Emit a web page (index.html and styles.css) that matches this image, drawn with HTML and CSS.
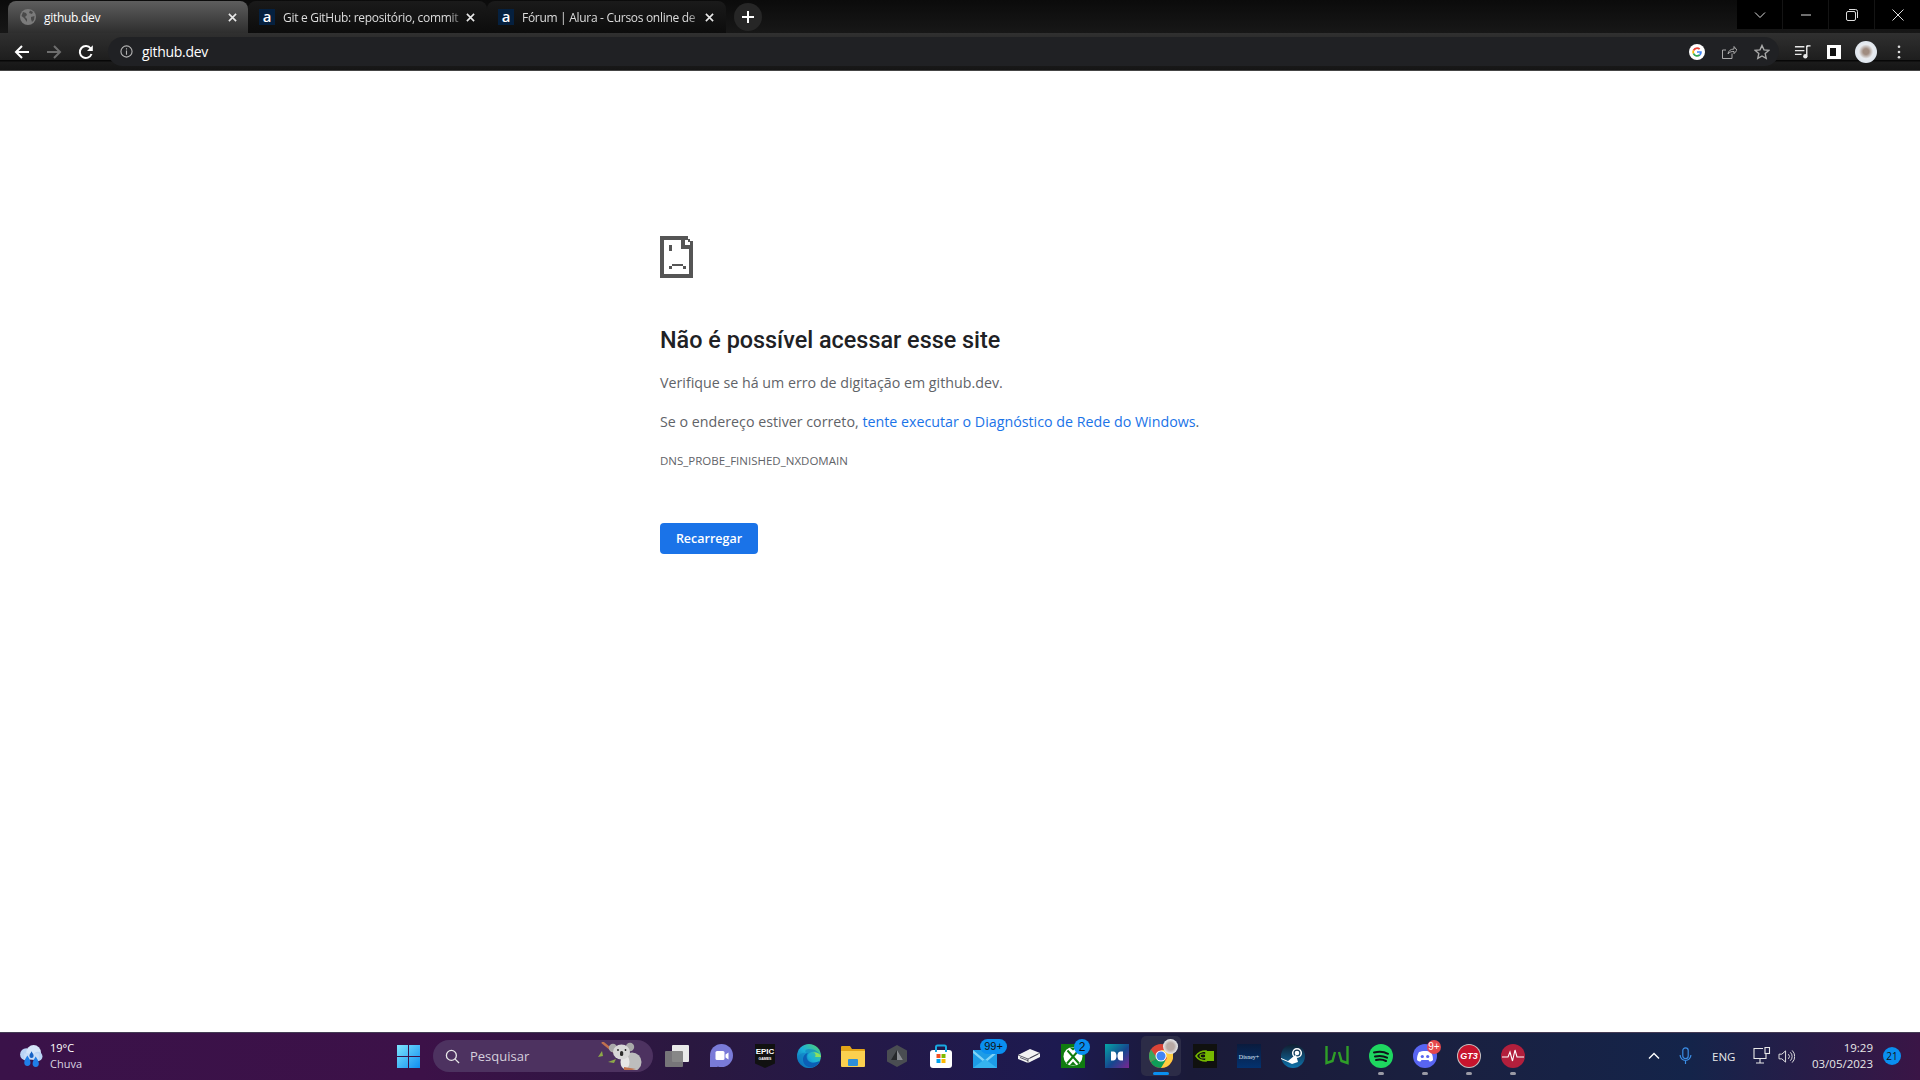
FILE: index.html
```html
<!DOCTYPE html>
<html lang="pt-BR">
<head>
<meta charset="utf-8">
<title>github.dev</title>
<link rel="stylesheet" href="styles.css">
</head>
<body>
<header class="tabstrip">
  <div class="tabs">
    <div class="tab tab-active">
      <svg class="favicon" viewBox="0 0 16 16"><circle cx="8" cy="8" r="8" fill="#7b7b7b"/><path d="M3 3l3 1 1 2-2 2 2 2v3L4 9 1.500 7zM10 1.500l3 1.500-1 2-3-1zM11 8l3.500-1-.5 4-2 2-1-3z" fill="#4a4a4a"/></svg>
      <span class="tab-title">github.dev</span>
      <svg class="tab-close" viewBox="0 0 10 10"><path d="M1 1l8 8M9 1l-8 8"/></svg>
    </div>
    <div class="tab">
      <span class="alura">a</span>
      <span class="tab-title fade">Git e GitHub: repositório, commit</span>
      <svg class="tab-close" viewBox="0 0 10 10"><path d="M1 1l8 8M9 1l-8 8"/></svg>
    </div>
    <div class="tab">
      <span class="alura">a</span>
      <span class="tab-title fade">Fórum | Alura - Cursos online de</span>
      <svg class="tab-close" viewBox="0 0 10 10"><path d="M1 1l8 8M9 1l-8 8"/></svg>
    </div>
    <div class="newtab"><svg viewBox="0 0 12 12"><path d="M6 0v12M0 6h12"/></svg></div>
  </div>
  <div class="winctl">
    <div class="winbtn"><svg viewBox="0 0 12 8"><path d="M1 1.500l5 5 5-5"/></svg></div>
    <div class="winbtn"><svg viewBox="0 0 12 8"><path d="M1 4h10"/></svg></div>
    <div class="winbtn"><svg viewBox="0 0 12 12"><rect x=".5" y="2.500" width="9" height="9" rx="1.500"/><path d="M3 .5h6.500a2 2 0 0 1 2 2V9"/></svg></div>
    <div class="winbtn"><svg viewBox="0 0 12 12"><path d="M.5.5l11 11M11.500.5l-11 11"/></svg></div>
  </div>
</header>

<nav class="toolbar">
  <svg class="nav-ic" viewBox="0 0 16 16"><path d="M15 8H2M8 2L2 8l6 6"/></svg>
  <svg class="nav-ic dim" viewBox="0 0 16 16"><path d="M1 8h13M8 2l6 6-6 6"/></svg>
  <svg class="nav-ic" viewBox="0 0 16 16"><path d="M13.500 10a6 6 0 1 1-.8-5.500"/><path class="solid" d="M14.800 1.200v5.800H9z"/></svg>
  <div class="omnibox">
    <svg class="info" viewBox="0 0 14 14"><circle cx="7" cy="7" r="6"/><path d="M7 6v4.500M7 3.500v1.300"/></svg>
    <span class="url">github.dev</span>
    <div class="omni-right">
      <svg class="g-logo" viewBox="0 0 16 16"><circle cx="8" cy="8" r="8" fill="#fff"/><path d="M8 3.200a4.800 4.800 0 0 1 3.300 1.300L10 5.800A3 3 0 0 0 5.200 7L3.700 5.900A4.800 4.800 0 0 1 8 3.200z" fill="#ea4335"/><path d="M3.700 5.900L5.200 7a3 3 0 0 0 0 2l-1.500 1.100a4.800 4.800 0 0 1 0-4.200z" fill="#fbbc05"/><path d="M3.700 10.100L5.200 9A3 3 0 0 0 10 10.300l1.400 1.100A4.800 4.800 0 0 1 3.700 10.100z" fill="#34a853"/><path d="M12.800 8c0 1.500-.5 2.600-1.400 3.400L10 10.300c.5-.4.800-.9.900-1.500H8V7.200h4.700c.1.300.1.500.1.800z" fill="#4285f4"/></svg>
      <svg class="omni-ic" viewBox="0 0 16 16"><path d="M11 9.500V14.500H1.500V6H5M7 10c.3-3 2.500-5 6-5V2.500l3 3.700-3 3.500V7.500C10.500 7.300 8.500 8 7 10z" stroke-width="1"/></svg>
      <svg class="omni-ic" viewBox="0 0 16 16"><path d="M8 1.500l2 4.400 4.800.5-3.600 3.200 1 4.700L8 12l-4.200 2.300 1-4.700L1.200 6.400 6 5.900z" stroke-width="1.400"/></svg>
    </div>
  </div>
  <div class="tool-right">
    <svg class="tool-ic" viewBox="0 0 18 16"><path d="M1 2.500h10M1 6.500h10M1 10.500h7M15 2h-1.500v10" stroke="#e8e8e8" stroke-width="1.500" fill="none"/><circle cx="12" cy="12.500" r="2.300" fill="#e8e8e8"/><path d="M13.500 1.500H17.500" stroke="#e8e8e8" stroke-width="1.500"/></svg>
    <div class="sidepanel"></div>
    <div class="avatar"></div>
    <svg class="menu" viewBox="0 0 4 16"><circle cx="2" cy="2" r="1.500"/><circle cx="2" cy="8" r="1.500"/><circle cx="2" cy="14" r="1.500"/></svg>
  </div>
</nav>

<main class="page">
  <div class="wrapper">
    <svg class="sad" viewBox="0 0 32 41" shape-rendering="crispEdges"><path d="M0 0h24v4H4v33h24V13h-8V0h4v9h8v-1h4v33H0z"/><path d="M24 0h3v4h-3zM27 3h2v3h-2zM29 5h3v4h-3zM9 9h3v6H9zM12 27h10v2H12zM9 29h3v3H9zM22 29h3v3h-3z"/></svg>
    <h1 class="err-title">Não é possível acessar esse site</h1>
    <p class="err-text">Verifique se há um erro de digitação em github.dev.</p>
    <p class="err-text">Se o endereço estiver correto, <a class="err-link" href="#">tente executar o Diagnóstico de Rede do Windows</a>.</p>
    <div class="err-code">DNS_PROBE_FINISHED_NXDOMAIN</div>
    <button class="reload">Recarregar</button>
  </div>
</main>

<footer class="taskbar">
  <div class="weather">
    <svg class="weather-ic" viewBox="0 0 24 24"><circle cx="8" cy="10" r="6" fill="#b9d4f5"/><circle cx="15" cy="8" r="7" fill="#d5e6fa"/><circle cx="19" cy="12" r="4.500" fill="#b9d4f5"/><rect x="6" y="9" width="14" height="6" fill="#c8ddf7"/><path d="M9 11c2 3 3 5 3 7a3 3 0 0 1-6 0c0-2 1-4 3-7zM17 12c2 3 3 5 3 7a3 3 0 0 1-6 0c0-2 1-4 3-7z" fill="#1f7fe8"/><path d="M13 7c1 2 2 3 2 4.500a2 2 0 0 1-4 0C11 10 12 9 13 7z" fill="#1762c4"/></svg>
    <div class="weather-text"><span>19°C</span><span class="weather-sub">Chuva</span></div>
  </div>
  <div class="start"><svg viewBox="0 0 23 23"><defs><linearGradient id="win" x1="0" y1="0" x2="1" y2="1"><stop offset="0" stop-color="#7de5fd"/><stop offset="1" stop-color="#0f8df0"/></linearGradient></defs><path fill="url(#win)" d="M0 0h11v11H0zM12 0h11v11H12zM0 12h11v11H0zM12 12h11v11H12z"/></svg></div>
  <div class="search">
    <svg class="search-ic" viewBox="0 0 16 16"><circle cx="6.800" cy="6.800" r="5.300"/><path d="M10.800 10.800L15 15"/></svg>
    <span class="search-text">Pesquisar</span>
    <svg class="koala" viewBox="0 0 46 28"><path d="M5 0l33 27" stroke="#c0714e" stroke-width="2.400"/><path d="M1 15l4-6 1 5zM11 20l8-3-2 4z" fill="#8ea948"/><circle cx="16" cy="6" r="4.200" fill="#a9a9a9"/><circle cx="33" cy="5" r="4.200" fill="#a9a9a9"/><circle cx="35" cy="20" r="9.500" fill="#bdbdbd"/><ellipse cx="28" cy="20" rx="4.500" ry="7" fill="#e6e6e6"/><ellipse cx="24.500" cy="10" rx="8.500" ry="7.500" fill="#d8d8d8"/><rect x="23" y="9" width="3.200" height="5" rx="1.600" fill="#2c2c2c"/><circle cx="21" cy="8" r=".9" fill="#222"/><circle cx="28.500" cy="8" r=".9" fill="#222"/><path d="M27 25l12 2-4 1h-8z" fill="#c0714e"/></svg>
  </div>
  <div class="apps">
    <div class="app"><svg viewBox="0 0 24 24"><rect x="7" y="1" width="17" height="17" rx="1" fill="#e9e9e9"/><rect x="0" y="7" width="18" height="16" rx="1" fill="#7e7e7e" opacity=".92"/></svg></div>
    <div class="app"><svg viewBox="0 0 24 24"><circle cx="12.500" cy="11.500" r="11.500" fill="#7a7bd8"/><path d="M1 12v11h8z" fill="#7a7bd8"/><rect x="6.500" y="7" width="9" height="9" rx="1.500" fill="#fff"/><path d="M16.500 10.500l3-2v7l-3-2z" fill="#fff"/></svg></div>
    <div class="app"><svg viewBox="0 0 20 24"><path d="M0 0h20v19.500L10 24 0 19.500z" fill="#111"/><text class="epic" x="10" y="10">EPIC</text><text class="epic-sm" x="10" y="16">GAMES</text></svg></div>
    <div class="app"><svg viewBox="0 0 24 24"><defs><linearGradient id="edge" x1="0" y1="1" x2="1" y2="0"><stop offset="0" stop-color="#0c59a4"/><stop offset=".5" stop-color="#1bb0da"/><stop offset="1" stop-color="#55d36c"/></linearGradient></defs><circle cx="12" cy="12" r="12" fill="url(#edge)"/><path d="M24 14c-1-5-5-7-9-6-5 1-6 6-3 9 3 2 7 2 11 0-1 4-6 7-11 7-6 0-11-5-12-11C3 9 7 8 10 9c-3-1-2-4 2-4 6 0 11 3 12 9z" fill="#0f7bc4" opacity=".55"/><path d="M11 9c-2 2-2 6 1 8.500 4 2.500 8 1 11-1-1 3-4 6-8 7-5 0-9-3-9-8 0-3 2-6 5-6.500z" fill="#0b5fb5"/><path d="M24 13c0-3-4-5-8-4.500 3 .5 3 3 2 4.500z" fill="#8fe05f"/></svg></div>
    <div class="app"><svg viewBox="0 0 24 24"><path d="M0 3a1 1 0 0 1 1-1h8l2 3h12a1 1 0 0 1 1 1v16H0z" fill="#e2a418"/><path d="M0 7h24v15a1 1 0 0 1-1 1H1a1 1 0 0 1-1-1z" fill="#fbd04f"/><rect x="7" y="15" width="10" height="7" rx="1" fill="#2d8fd8"/></svg></div>
    <div class="app"><svg viewBox="0 0 24 24"><path d="M12 1l10 5.500v11L12 23 2 17.500v-11z" fill="#4a4d52"/><path d="M12 6l6 10H6z" fill="#26282b"/><path d="M12 6l6 10h-6z" fill="#8a8d92"/></svg></div>
    <div class="app"><svg viewBox="0 0 24 24"><rect x="1" y="6" width="22" height="18" rx="3" fill="#fff"/><path d="M7 8V3a1.500 1.500 0 0 1 1.500-1.500h7A1.500 1.500 0 0 1 17 3v5" fill="none" stroke="#19a8e0" stroke-width="2"/><rect x="7.500" y="10" width="4" height="4" fill="#f25022"/><rect x="12.500" y="10" width="4" height="4" fill="#7fba00"/><rect x="7.500" y="15" width="4" height="4" fill="#00a4ef"/><rect x="12.500" y="15" width="4" height="4" fill="#ffb900"/></svg></div>
    <div class="app"><svg viewBox="0 0 24 24"><path d="M0 6h24v18H0z" fill="#1d9ce6"/><path d="M0 6l12 10 12-10v3L12 19 0 9z" fill="#7fd3f7"/><path d="M0 24l12-9 12 9z" fill="#35b4ef"/></svg><span class="badge badge-wide">99+</span></div>
    <div class="app"><svg viewBox="0 0 24 24"><path d="M1 11l12-6 10 4v4L11 19 1 15z" fill="#f3f3f3"/><path d="M1 11l10 4 12-6M11 15v4M3 13.500l8 3.200M13 14l8-4" fill="none" stroke="#3a3a4a" stroke-width=".8"/></svg></div>
    <div class="app"><svg viewBox="0 0 24 24"><rect width="24" height="24" fill="#107c10"/><circle cx="12" cy="12.500" r="9.500" fill="#fff"/><path d="M6.500 6.500L18 19.500M17.500 6.500L6 19.500" stroke="#107c10" stroke-width="2"/><path d="M8.500 3.500L12 6.500l3.500-3zM8.500 21.500L12 17.500l3.500 4z" fill="#107c10"/></svg><span class="badge badge-round">2</span></div>
    <div class="app"><svg viewBox="0 0 24 24"><defs><linearGradient id="dolby" x1="0" y1="0" x2="1" y2="1"><stop offset="0" stop-color="#05a6a6"/><stop offset=".55" stop-color="#16478f"/><stop offset="1" stop-color="#7b2592"/></linearGradient></defs><rect width="24" height="24" fill="url(#dolby)"/><path d="M6 7.500h2.500c2.500 0 3 3 3 4.500s-.5 4.500-3 4.500H6zM18 7.500h-2.500c-2.500 0-3 3-3 4.500s.5 4.500 3 4.500H18z" fill="#fff"/></svg></div>
    <div class="app app-active"><svg viewBox="0 0 24 24"><circle cx="12" cy="12" r="12" fill="#db4437"/><path d="M12 12L1.600 18A12 12 0 0 0 12 24l5.500-6z" fill="#0f9d58"/><path d="M12 6h10.500A12 12 0 0 1 12 24l6-10z" fill="#ffcd40"/><path d="M1.600 18A12 12 0 0 1 2 5.500L8 14z" fill="#3ba55d"/><circle cx="12" cy="12" r="5.500" fill="#fff"/><circle cx="12" cy="12" r="4.500" fill="#4285f4"/></svg><span class="overlay-avatar"></span><span class="run-bar"></span></div>
    <div class="app"><svg viewBox="0 0 24 24"><rect width="24" height="24" fill="#10110f"/><rect x="13" y="7" width="8" height="10" fill="#76b900"/><path d="M3 12c2-3 6-5 10-5v10c-4 0-8-2-10-5z" fill="none" stroke="#76b900" stroke-width="1.600"/><ellipse cx="10" cy="12" rx="3" ry="2" fill="none" stroke="#76b900" stroke-width="1.200"/></svg></div>
    <div class="app"><svg viewBox="0 0 24 24"><defs><linearGradient id="dis" x1="0" y1="0" x2="0" y2="1"><stop offset="0" stop-color="#0a1b3d"/><stop offset="1" stop-color="#03326f"/></linearGradient></defs><rect width="24" height="24" fill="url(#dis)"/><text class="disney" x="12" y="14.500">Disney+</text></svg></div>
    <div class="app"><svg viewBox="0 0 24 24"><defs><linearGradient id="steam" x1="0" y1="0" x2="0" y2="1"><stop offset="0" stop-color="#111d2e"/><stop offset="1" stop-color="#0e73ac"/></linearGradient></defs><circle cx="12" cy="12" r="12" fill="url(#steam)"/><path d="M0 14l7 3 6-5 2-1 2 7-6 2-4-2-7-3z" fill="#fff"/><circle cx="16" cy="9" r="4.300" fill="none" stroke="#fff" stroke-width="1.500"/><circle cx="16" cy="9" r="2.300" fill="#fff"/></svg></div>
    <div class="app"><svg viewBox="0 0 24 24"><path d="M1.500 2v17l6-2 2.500-9M22.500 2v17l-6-2-2.500-9" fill="none" stroke="#2f9e28" stroke-width="2.400"/></svg></div>
    <div class="app"><svg viewBox="0 0 24 24"><circle cx="12" cy="12" r="12" fill="#1ed760"/><path d="M5 8.500c4.500-1.200 10-1 14 1.300M6 12.500c4-1 8.500-.7 12 1.200M7 16c3.500-.8 7-.5 10 1" fill="none" stroke="#10131a" stroke-width="2" stroke-linecap="round"/></svg><span class="dot"></span></div>
    <div class="app"><svg viewBox="0 0 24 24"><circle cx="12" cy="12" r="12" fill="#5865f2"/><path d="M6 8c3-1.500 9-1.500 12 0 1.500 2.500 2 5 2 8-1 1-2.500 1.500-3.500 1.500L15.500 16h-7l-1 1.500C6.500 17.500 5 17 4 16c0-3 .5-5.500 2-8z" fill="#fff"/><circle cx="9.300" cy="12.500" r="1.600" fill="#5865f2"/><circle cx="14.700" cy="12.500" r="1.600" fill="#5865f2"/></svg><span class="badge badge-red">9+</span><span class="dot"></span></div>
    <div class="app"><svg viewBox="0 0 24 24"><circle cx="12" cy="12" r="12" fill="#c8c2c2"/><circle cx="12" cy="12" r="11" fill="#c7142d"/><text class="gt3" x="12" y="15">GT3</text></svg><span class="dot"></span></div>
    <div class="app"><svg viewBox="0 0 24 24"><circle cx="12" cy="12" r="12" fill="#b21f3c"/><path d="M1 13h6l2-5 2.500 9 2.500-11 2 7h7" fill="none" stroke="#fff" stroke-width="1.100"/></svg><span class="dot"></span></div>
  </div>
  <div class="tray">
    <svg class="tray-caret" viewBox="0 0 12 8"><path d="M1 6.500l5-5 5 5"/></svg>
    <svg class="tray-mic" viewBox="0 0 14 20"><rect x="4" y="1" width="6" height="12" rx="3"/><path d="M1 9a6 6 0 0 0 12 0M7 15v4"/></svg>
    <span class="tray-lang">ENG</span>
    <svg class="tray-net" viewBox="0 0 18 18"><path d="M10 1.500H1v10h12V7M7 11.500v4M3 16h8M13 7v5"/><rect x="12" y=".5" width="4.500" height="6"/></svg>
    <svg class="tray-vol" viewBox="0 0 18 16"><path d="M1 5.500h3l4-3.500v12l-4-3.500H1zM11 5.500a3.500 3.500 0 0 1 0 5M13 3.500a6 6 0 0 1 0 9M15 1.500a9 9 0 0 1 0 13"/></svg>
    <div class="clock"><span>19:29</span><span>03/05/2023</span></div>
    <span class="notif">21</span>
  </div>
</footer>
</body>
</html>
```
FILE: styles.css
```css
* { box-sizing: border-box; }
html, body { margin: 0; height: 100%; }
body {
  width: 1920px; height: 1080px; overflow: hidden;
  display: flex; flex-direction: column;
  font-family: "Open Sans", "Noto Sans", sans-serif;
  background: #fff;
}

/* tab strip */
.tabstrip { height: 33px; flex: none; display: flex; justify-content: space-between; background: linear-gradient(#0b0b0b, #171717); }
.tabs { display: flex; align-items: flex-end; padding-left: 8px; }
.tab {
  width: 239px; height: 32px; padding: 0 8px 0 11px;
  display: flex; align-items: center; border-radius: 8px 8px 0 0;
  background: linear-gradient(#1a1a1a, #0c0c0c);
}
.tab-active { width: 240px; padding: 0 7px 0 12px; background: linear-gradient(#5e5e5e, #2e2e2e); }
.favicon { width: 16px; height: 16px; flex: none; }
.tab-title { font-size: 12px; color: #fff; margin-left: 8px; flex: 1; white-space: nowrap; letter-spacing: -.3px; min-width: 0; }
.fade { color: #ddd; -webkit-mask-image: linear-gradient(90deg, #000 90%, transparent); mask-image: linear-gradient(90deg, #000 90%, transparent); }
.tab-close { width: 9px; height: 9px; margin: 0 4px 0 0; flex: none; fill: none; stroke: #e8e8e8; stroke-width: 1.800; }
.alura { width: 16px; height: 16px; flex: none; background: #05203f; color: #fff; font-size: 15px; font-weight: 600; line-height: 14px; text-align: center; }
.newtab { width: 28px; height: 28px; margin: 0 0 2px 8px; border-radius: 50%; background: #262626; display: flex; align-items: center; justify-content: center; }
.newtab svg { width: 12px; height: 12px; fill: none; stroke: #fff; stroke-width: 2; }
.winctl { display: flex; height: 29px; background: #000; width: 183px; }
.winbtn { flex: 1; display: flex; align-items: center; justify-content: center; border-left: 1px solid #141414; }
.winbtn:first-child { border-left: 0; }
.winbtn svg { width: 12px; height: 12px; fill: none; stroke: #ddd; stroke-width: 1; }

/* toolbar */
.toolbar {
  height: 38px; flex: none; display: flex; align-items: center; padding: 0 0 0 14px;
  background: linear-gradient(#303030 0, #1e1e1e 72%, #070707 74%, #070707 76%, #1b1b1b 78%, #151515 100%);
  border-bottom: 1px solid #454545;
}
.nav-ic { width: 16px; height: 16px; margin-right: 16px; fill: none; stroke: #fff; stroke-width: 2; flex: none; }
.nav-ic.dim { stroke: #6e6e6e; }
.nav-ic .solid { fill: #fff; stroke: none; }
.omnibox {
  width: 1671px; height: 29px; margin-left: -2px; border-radius: 15px; background: #202124;
  display: flex; align-items: center; padding: 0 0 0 12px;
}
.info { width: 13px; height: 13px; fill: none; stroke: #b5b5b5; stroke-width: 1.200; flex: none; }
.url { font-size: 14px; color: #fff; margin-left: 9px; letter-spacing: -.3px; }
.omni-right { margin-left: auto; display: flex; align-items: center; gap: 17px; padding-right: 9px; }
.g-logo { width: 16px; height: 16px; position: relative; left: 1px; }
.omni-ic { width: 16px; height: 16px; fill: none; stroke: #aaa; }
.tool-right { display: flex; align-items: center; margin-left: 15px; }
.tool-ic { width: 17px; height: 16px; }
.sidepanel { width: 14px; height: 14px; margin-left: 16px; border: 3px solid #fff; border-right-width: 5px; background: #111; }
.avatar { width: 22px; height: 22px; margin-left: 14px; border-radius: 50%; background: radial-gradient(circle at 50% 48%, #a08c80 0 18%, #e8ebef 45%, #dfe6ee 70%, #7d93ad 100%); }
.menu { width: 4px; height: 14px; margin-left: 20px; fill: #ddd; }

/* error page */
.page { flex: 1; min-height: 0; background: #fff; }
.wrapper { width: 600px; margin: 0 auto; padding-top: 165px; display: flex; flex-direction: column; align-items: flex-start; }
.sad { width: 33px; height: 42px; fill: #555; flex: none; }
.err-title { margin: 46px 0 15px; font-family: Roboto, "Open Sans", sans-serif; font-size: 23.400px; font-weight: 500; line-height: 32px; color: #202124; white-space: nowrap; }
.err-text { margin: 0 0 15px; font-size: 14.250px; line-height: 24px; color: #5f6368; white-space: nowrap; }
.err-link { color: #1a73e8; text-decoration: none; }
.err-code { margin-top: 4px; font-size: 11.500px; line-height: 16px; color: #5f6368; }
.reload { margin-top: 54px; width: 98px; height: 31px; padding: 0 0 1px; border: 0; border-radius: 4px; background: #1a73e8; color: #fff; font-family: inherit; font-size: 12.500px; font-weight: 600; }

/* taskbar */
.taskbar {
  height: 48px; flex: none; display: flex; align-items: center; color: #fff;
  background: linear-gradient(90deg, #3a1249 0, #3c1148 22%, #2a1840 36%, #1d1a50 55%, #1a1a38 62%, #1a2040 75%, #14244a 88%, #3a1546 100%);
  box-shadow: inset 0 1px 0 #453c55;
}
.weather { width: 386px; flex: none; display: flex; align-items: center; padding-left: 18px; }
.weather-ic { width: 25px; height: 25px; }
.weather-text { margin-left: 7px; display: flex; flex-direction: column; font-size: 11px; line-height: 16px; }
.weather-sub { color: #d9d4e0; }
.start { width: 44px; flex: none; display: flex; justify-content: center; }
.start svg { width: 23px; height: 23px; }
.search { width: 220px; height: 32px; margin: 0 2px 0 3px; flex: none; border-radius: 16px; background: #4d3260; display: flex; align-items: center; padding-left: 12px; position: relative; }
.search-ic { width: 15px; height: 15px; fill: none; stroke: #e8e8e8; stroke-width: 1.400; flex: none; }
.search-text { font-size: 13px; color: #d6d0dd; margin-left: 10px; }
.koala { position: absolute; right: 10px; top: 2px; width: 46px; height: 28px; }
.apps { display: flex; width: 880px; flex: none; }
.app { width: 44px; height: 48px; flex: none; display: flex; align-items: center; justify-content: center; position: relative; }
.app svg { width: 24px; height: 24px; position: relative; }
.app-active::before { content: ""; position: absolute; left: 2px; top: 4px; width: 40px; height: 40px; border-radius: 5px; background: #2c2c47; }
.epic { font-family: "Liberation Sans", sans-serif; font-size: 8px; font-weight: 700; fill: #fff; text-anchor: middle; }
.epic-sm { font-family: "Liberation Sans", sans-serif; font-size: 3.500px; font-weight: 700; fill: #fff; text-anchor: middle; }
.disney { font-family: "Liberation Serif", serif; font-size: 6px; fill: #dfe8f5; text-anchor: middle; }
.gt3 { font-family: "Liberation Sans", sans-serif; font-size: 9px; font-weight: 700; font-style: italic; fill: #fff; text-anchor: middle; }
.badge { position: absolute; font-size: 12px; line-height: 16px; text-align: center; font-family: "Liberation Sans", sans-serif; }
.badge-wide { top: 7px; left: 17px; width: 27px; height: 15px; line-height: 15px; border-radius: 8px; background: #0a8ff0; color: #111; font-size: 11px; }
.badge-round { top: 7px; left: 23px; width: 16px; height: 16px; border-radius: 50%; background: #0a8ff0; color: #111; }
.badge-red { top: 8px; left: 24px; width: 14px; height: 14px; border-radius: 50%; background: #e5484d; color: #fff; font-size: 10px; line-height: 14px; }
.overlay-avatar { position: absolute; top: 7px; left: 24px; width: 15px; height: 15px; border-radius: 50%; background: radial-gradient(circle, #b8a9a4 0 35%, #e9ecef 70%); }
.run-bar { position: absolute; bottom: 5px; left: 14px; width: 16px; height: 3px; border-radius: 2px; background: #0a8ff0; }
.dot { position: absolute; bottom: 5px; left: 19px; width: 6px; height: 3px; border-radius: 2px; background: #9a9aa5; }
.tray { flex: 1; display: flex; align-items: center; padding-left: 113px; }
.tray-caret { width: 12px; height: 8px; fill: none; stroke: #fff; stroke-width: 1.400; flex: none; }
.tray-mic { width: 13px; height: 18px; margin-left: 19px; fill: none; stroke: #3b8fe8; stroke-width: 1.300; flex: none; }
.tray-lang { font-size: 11.500px; color: #e8e8e8; margin-left: 20px; width: 25px; }
.tray-net { width: 18px; height: 18px; margin-left: 16px; fill: none; stroke: #e8e8e8; stroke-width: 1.100; flex: none; }
.tray-vol { width: 17px; height: 15px; margin-left: 7px; fill: none; stroke: #e8e8e8; stroke-width: 1; flex: none; }
.clock { margin-left: auto; display: flex; flex-direction: column; align-items: flex-end; font-size: 11.500px; line-height: 16px; color: #e8e8e8; }
.notif { width: 18px; height: 18px; margin: 0 19px 0 10px; border-radius: 50%; background: #0a8ff0; color: #111; font-size: 10px; line-height: 18px; text-align: center; flex: none; }
```
